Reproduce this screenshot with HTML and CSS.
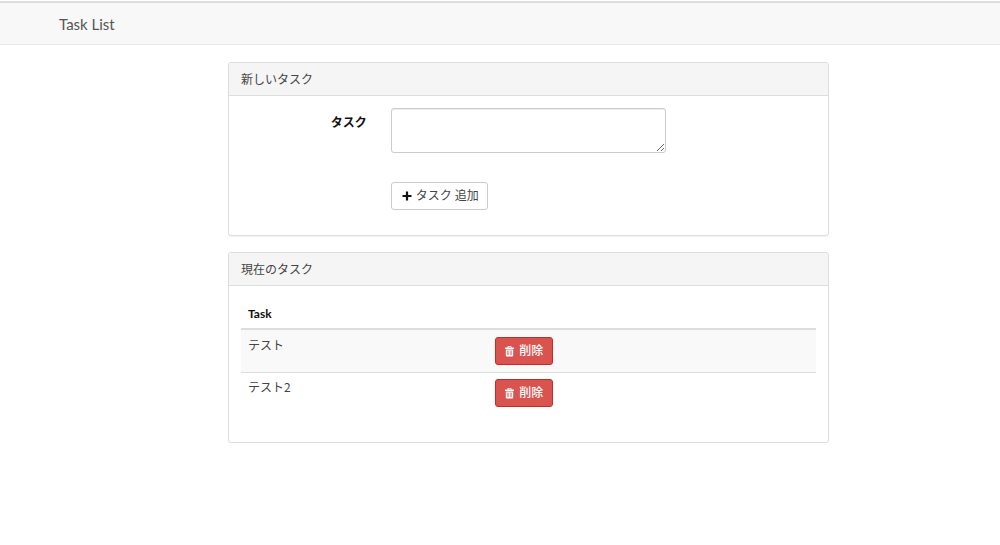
FILE: index.html
```html
<!DOCTYPE html>
<html lang="ja">
<head>
<meta charset="utf-8">
<meta name="viewport" content="width=device-width, initial-scale=1">
<title>Task List</title>
<link rel="stylesheet" href="styles.css">
</head>
<body>
<svg class="symbols" aria-hidden="true">
  <symbol id="plus" viewBox="0 0 10 10"><path d="M3.9 .5h2.2v3.4h3.4v2.2H6.1v3.4H3.9V6.1H.5V3.9h3.4z"/></symbol>
  <symbol id="trash" viewBox="0 0 10 12"><path fill-rule="evenodd" d="M3.4 0h3.2q.6 0 .6.6v.9h2.1q.7 0 .7.7v.9H0v-.9q0-.7.7-.7h2.1V.6q0-.6.6-.6zM3.7.8v.7h2.6V.8zM.9 3.8h8.2v6.6q0 1.1-1.1 1.1H2Q.9 11.5.9 10.4zM2.5 4.8v5.2h.6V4.8zm1.4 0v5.2h.6V4.8zm1.6 0v5.2h.6V4.8zm1.4 0v5.2h.6V4.8z"/></symbol>
</svg>
<nav class="navbar"><a class="brand" href="#">Task List</a></nav>
<main class="content">
  <section class="panel">
    <h2 class="panel-heading">新しいタスク</h2>
    <form class="task-form">
      <label class="task-label" for="task">タスク</label>
      <textarea class="task-input" id="task" name="task"></textarea>
      <div class="form-actions">
        <button class="btn" type="button"><svg class="icon-plus" aria-hidden="true"><use href="#plus"/></svg>タスク 追加</button>
      </div>
    </form>
  </section>
  <section class="panel">
    <h2 class="panel-heading">現在のタスク</h2>
    <div class="panel-body">
      <table class="task-table">
        <thead><tr><th class="name-col" scope="col">Task</th><th></th></tr></thead>
        <tbody>
          <tr><td class="name">テスト</td><td><button class="btn btn-danger" type="button"><svg class="icon-trash" aria-hidden="true"><use href="#trash"/></svg>削除</button></td></tr>
          <tr><td class="name">テスト2</td><td><button class="btn btn-danger" type="button"><svg class="icon-trash" aria-hidden="true"><use href="#trash"/></svg>削除</button></td></tr>
        </tbody>
      </table>
    </div>
  </section>
</main>
</body>
</html>
```
FILE: styles.css
```css
* { box-sizing: border-box; }
body {
  margin: 0;
  padding-top: 1px;
  background: #fff;
  color: #444;
  font: 12px/16px Lato, "Noto Sans CJK JP", sans-serif;
}
.symbols { display: none; }
.navbar {
  display: flex;
  align-items: center;
  height: 44px;
  padding: 0 59px;
  background: #f8f8f8;
  border-top: 2px solid #ddd;
  border-bottom: 1px solid #e7e7e7;
}
.brand {
  color: #555;
  font-size: 15px;
  line-height: 20px;
  text-decoration: none;
}
.content {
  display: grid;
  gap: 16px;
  width: 60.1%;
  margin: 17px 0 0 22.8%;
}
.panel {
  border: 1px solid #ddd;
  border-radius: 3px;
  box-shadow: 0 1px 1px rgba(0, 0, 0, .05);
}
.panel-heading {
  margin: 0;
  padding: 9px 12px 7px;
  background: #f5f5f5;
  border-bottom: 1px solid #ddd;
  border-radius: 2px 2px 0 0;
  font-size: 12px;
  font-weight: 400;
}
.task-form {
  display: grid;
  grid-template-columns: 3fr 6fr 3fr;
  row-gap: 29px;
  padding: 12px 0 25px;
}
.task-label {
  padding: 7px 12px 0;
  color: #111;
  font-weight: 700;
  text-align: right;
}
.task-input {
  height: 45px;
  margin: 0 12px;
  padding: 5px 10px;
  border: 1px solid #ccc;
  border-radius: 3px;
  box-shadow: inset 0 1px 1px rgba(0, 0, 0, .075);
  background: #fff;
  color: #555;
  font: inherit;
  resize: vertical;
}
.form-actions {
  grid-column: 2;
  padding: 0 12px;
}
.btn {
  display: inline-flex;
  align-items: center;
  gap: 4px;
  height: 28px;
  padding: 0 8px 0 10px;
  border: 1px solid #ccc;
  border-radius: 3px;
  background: #fff;
  color: #444;
  font: inherit;
  white-space: nowrap;
  vertical-align: top;
}
.btn-danger {
  gap: 5px;
  padding: 0 9px;
  border-color: #c12e2a;
  background: #d9534f;
  color: #fff;
  font-weight: 500;
}
.icon-plus { width: 10px; height: 10px; fill: #111; }
.icon-trash { width: 9px; height: 11px; fill: #fff; }
.panel-body { padding: 13px 12px 28px; }
.task-table {
  width: 100%;
  border-collapse: separate;
  border-spacing: 0;
  table-layout: fixed;
}
.task-table th {
  padding: 7px 7px 6px;
  border-bottom: 2px solid #ddd;
  color: #111;
  text-align: left;
}
.task-table .name-col { width: 43%; }
.task-table td {
  padding: 7px;
  vertical-align: top;
}
.task-table .name { font-family: "Noto Sans CJK JP", sans-serif; }
.task-table tbody tr:first-child td { background: #f9f9f9; }
.task-table tbody tr + tr td {
  padding-top: 6px;
  border-top: 1px solid #ddd;
}
```
